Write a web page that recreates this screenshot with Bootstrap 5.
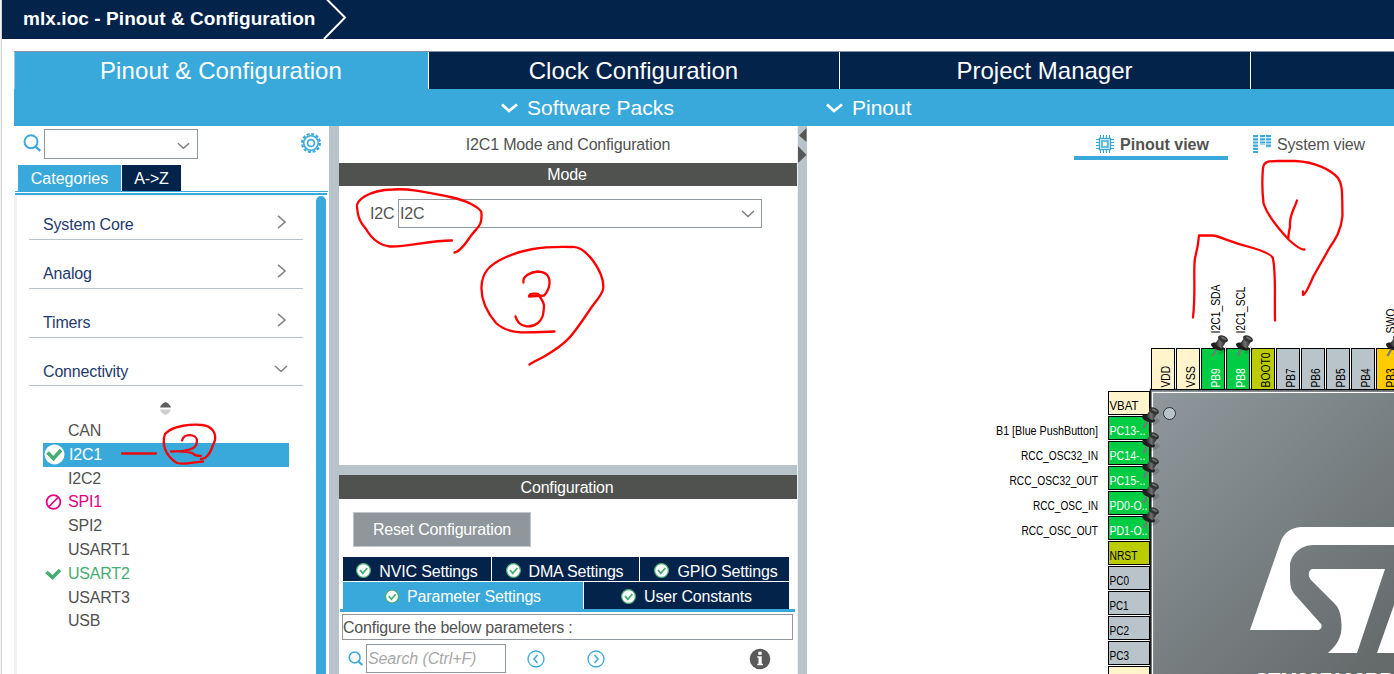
<!DOCTYPE html>
<html lang="en">
<head>
<meta charset="utf-8">
<title>mlx.ioc - Pinout &amp; Configuration</title>
<link href="https://cdn.jsdelivr.net/npm/bootstrap@5.3.0/dist/css/bootstrap.min.css" rel="stylesheet">
<style>
:root{--navy:#03234b;--sky:#39a9dc;--steel:#b8c3ca;--ink:#525252}
body{font-family:"Liberation Sans",Arial,sans-serif;font-size:16px;line-height:20px;letter-spacing:-.17px;color:var(--ink);height:674px;overflow:hidden;background:#fff}
svg{display:block;flex:none}
.app{height:674px;border-left:1px solid #f0f0f0;box-shadow:inset 1px 0 #d4d6d8;padding-left:1px}
.titlebar{height:39px;background:var(--navy);color:#fff;font-size:19px;font-weight:700;letter-spacing:.07px;padding-left:21px}
.titlebar span{width:300px;padding-bottom:2px}
.main-tabs{height:38px;margin:12px 0 0 12px;font-size:24px;letter-spacing:0;color:#fff;line-height:38px;border-top:1px solid #8794a8}
.main-tabs>div{background:var(--navy);text-align:center;width:411px;border-left:1px solid #fff;flex:none;padding-right:1px}
.main-tabs>.on{background:var(--sky);width:414px;border-left-color:#8fcdea;letter-spacing:.08px}
.subbar{height:37px;margin-left:12px;background:var(--sky);color:#fff;font-size:21px;letter-spacing:0;padding-left:487px}
.subbar .packs{width:325px}
.subbar span{margin-left:9px}
.work{height:548px;margin-left:12px}
.side{width:315px}
.split{width:10px;background:var(--steel);flex:none}
.mid{width:458px}
.finder{height:39px;padding:3px 8px 0 9px}
.combo{border:1px solid #8f979d;background:#fff;color:#525252}
.combo svg{color:#808080}
.finder .combo{width:154px;height:30px;margin-left:3px;padding-right:7px}
.cat-tabs{height:26px;margin-left:4px;color:#fff;line-height:27px}
.cat-tabs div{background:var(--navy);width:59px;text-align:center;margin-left:1px}
.cat-tabs .on{background:var(--sky);width:103px;margin:0;letter-spacing:0}
.rule1{height:1px;background:var(--sky);margin:0 1px}
.rule2{height:2px;background:var(--sky);margin:1px 2px 0 1px}
.tree{height:479px;border-left:3px solid #f1f1f2;padding:0 0 0 12px}
.scroller{width:10px;background:var(--sky);border-radius:5px 5px 0 0;margin:1px 3px 0 0}
.edge{width:274px}
.cat{height:49px;border-bottom:1px solid var(--steel);color:#243a6b;padding:24px 17px 0 14px}
.cat svg{margin-top:0}
.cat:first-child{height:45px;padding-top:20px}
.cat.open{height:48px;padding-right:15px}
.periph{margin:4px 14px 0;letter-spacing:-.2px}
.periph div{height:23.8px;line-height:24px;padding-left:25px;position:relative}
.periph svg{position:absolute;left:0;top:1px}
.periph .sel{background:var(--sky);color:#fff;padding-left:26px}
.barhead{background:#50524f;color:#fff;text-align:center;padding-right:2px}
.modepane{height:279px;padding:13px 35px 0 31px}
.modepane .combo{width:364px;height:29px;padding:0 6px 0 1px}
.reset{width:178px;height:35px;background:#90979c;border:1px solid #c3c7ca;color:#fff;line-height:33px;text-align:center;margin:13px 0 10px 14px}
.ptab{background:var(--navy);color:#fff;height:24px;padding-top:5px}
.ptab svg{margin-top:1px}
.ptab.low{height:27px;padding-top:3px}
.ptab.low svg{margin-top:-2px}
.desc{height:26px;border:1px solid #8f979d;line-height:25px;margin:2px 4px 0 3px;padding-left:0;letter-spacing:-.22px}
.find2{padding:4px 0 0 9px}
.find2 .combo{width:140px;height:29px;line-height:28px;font-style:italic;color:#a8a8a8;padding-left:1px;letter-spacing:-.1px}
.vtab{height:34px;padding-top:6px}
.vtab span{line-height:25px}
.vtab.on{font-weight:700;border-bottom:4px solid var(--sky);width:154px}
.pin-name{letter-spacing:0}
.ink{position:absolute;left:0;top:0;pointer-events:none}
</style>
</head>
<body>
<svg width="0" height="0" class="position-absolute">
 <defs>
  <symbol id="down" viewBox="0 0 14 8"><path d="M1 1 7 6.5 13 1" fill="none" stroke="currentColor" stroke-width="1.6"/></symbol>
  <symbol id="right" viewBox="0 0 9 14"><path d="M1 .8 8 7 1 13.2" fill="none" stroke="#858585" stroke-width="1.6"/></symbol>
  <symbol id="lens" viewBox="0 0 18 18"><circle cx="8" cy="7.7" r="6.5" fill="none" stroke="#39a9dc" stroke-width="1.9"/><path d="m12.3 12.3 4.9 4.5" stroke="#39a9dc" stroke-width="2.4"/></symbol>
  <symbol id="ok" viewBox="0 0 15 15"><circle cx="7.5" cy="7.5" r="6.9" fill="#fff" stroke="#45ad70" stroke-width="1.2"/><path d="m4 7 2.8 3.4L11.3 5" fill="none" stroke="#45ad70" stroke-width="1.8"/></symbol>
 </defs>
</svg>
<div class="app">
 <header class="titlebar d-flex align-items-center"><span>mlx.ioc - Pinout &amp; Configuration</span>
  <svg width="24" height="39"><path d="M3.500-1 22 17.500 1 39" fill="none" stroke="#fff" stroke-width="2"/></svg></header>
 <nav class="main-tabs d-flex overflow-hidden"><div class="on">Pinout &amp; Configuration</div><div>Clock Configuration</div><div>Project Manager</div><div></div></nav>
 <div class="subbar d-flex align-items-center">
  <div class="packs d-flex align-items-center"><svg width="17" height="10"><path d="M1 1.500 8 8 16 1.500" fill="none" stroke="#fff" stroke-width="2.800"/></svg><span style="letter-spacing:.08px">Software Packs</span></div>
  <div class="d-flex align-items-center"><svg width="17" height="10"><path d="M1 1.500 8 8 16 1.500" fill="none" stroke="#fff" stroke-width="2.800"/></svg><span>Pinout</span></div>
 </div>
 <main class="work d-flex overflow-hidden">
  <aside class="side flex-shrink-0">
   <div class="finder d-flex align-items-start">
    <svg width="18" height="18" viewBox="0 0 18 18" style="margin-top:5px"><use href="#lens"/></svg>
    <div class="combo d-flex align-items-center justify-content-end"><svg width="13" height="8" class="mt-1"><use href="#down"/></svg></div>
    <svg class="ms-auto mt-1" width="20" height="20" viewBox="-10 -10 20 20" fill="none" stroke="#39a9dc"><circle r="9" stroke-width="2" stroke-dasharray="3 1.710"/><circle r="7.300" stroke-width="1.600"/><circle r="3.400" stroke-width="1.700"/></svg>
   </div>
   <div class="cat-tabs d-flex"><div class="on">Categories</div><div>A-&gt;Z</div></div>
   <div class="rule1"></div><div class="rule2"></div>
   <div class="tree d-flex justify-content-between">
    <div class="edge">
     <div class="cat d-flex justify-content-between"><span>System Core</span><svg width="9" height="14"><use href="#right"/></svg></div>
     <div class="cat d-flex justify-content-between"><span>Analog</span><svg width="9" height="14"><use href="#right"/></svg></div>
     <div class="cat d-flex justify-content-between"><span>Timers</span><svg width="9" height="14"><use href="#right"/></svg></div>
     <div class="cat open d-flex justify-content-between"><span>Connectivity</span><svg width="14" height="8" style="margin-top:3px" color="#858585"><use href="#down"/></svg></div>
     <svg width="11" height="13" style="margin:16px 0 0 131px"><path d="M0 5.500Q1 2 5.500 0 10 2 11 5.500Z" fill="#5c5c5c"/><path d="M0 7.500H11Q10 11 5.500 13 1 11 0 7.500Z" fill="#cfcfcf"/></svg>
     <div class="periph">
      <div>CAN</div>
      <div class="sel"><svg width="22" height="22"><circle cx="11.500" cy="10.500" r="10" fill="#fff"/><path d="m4.500 8.500 6 6L18 6" fill="none" stroke="#45ad70" stroke-width="3.600"/></svg>I2C1</div>
      <div>I2C2</div>
      <div style="color:#e6007e"><svg width="22" height="22" fill="none" stroke="#e6007e" stroke-width="1.700"><circle cx="10.500" cy="11" r="6.900"/><path d="m6 15.500 9-9"/></svg>SPI1</div>
      <div>SPI2</div><div>USART1</div>
      <div style="color:#45ad70"><svg width="22" height="22"><path d="m3.500 9 6 5.500L17 7" fill="none" stroke="#45ad70" stroke-width="3.500"/></svg>USART2</div>
      <div>USART3</div><div>USB</div>
     </div>
    </div>
    <div class="scroller"></div>
   </div>
  </aside>
  <div class="split"></div>
  <section class="mid flex-shrink-0">
   <div class="text-center" style="height:37px;line-height:37px">I2C1 Mode and Configuration</div>
   <div class="barhead" style="height:23px;line-height:23px">Mode</div>
   <div class="modepane d-flex align-items-start justify-content-between"><span style="line-height:29px">I2C</span>
    <div class="combo d-flex align-items-center justify-content-between"><span>I2C</span><svg width="14" height="8"><use href="#down"/></svg></div></div>
   <div style="height:10px;background:var(--steel)"></div>
   <div class="barhead" style="height:24px;line-height:25px">Configuration</div>
   <div class="reset">Reset Configuration</div>
   <div style="margin:0 8px 0 4px">
    <div class="d-flex" style="gap:1px">
     <div class="ptab d-flex justify-content-center gap-2" style="width:148px"><svg width="15" height="15" viewBox="0 0 15 15"><use href="#ok"/></svg>NVIC Settings</div>
     <div class="ptab d-flex justify-content-center gap-2" style="width:147px;padding-right:2px"><svg width="15" height="15" viewBox="0 0 15 15"><use href="#ok"/></svg>DMA Settings</div>
     <div class="ptab d-flex justify-content-center gap-2 flex-fill" style="padding-left:3px"><svg width="15" height="15" viewBox="0 0 15 15"><use href="#ok"/></svg>GPIO Settings</div>
    </div>
    <div class="d-flex" style="gap:1px;margin-top:1px">
     <div class="ptab low d-flex align-items-center justify-content-center gap-2" style="width:240px;background:var(--sky)"><svg width="14" height="15" viewBox="0 0 15 15"><use href="#ok"/></svg>Parameter Settings</div>
     <div class="ptab low d-flex align-items-center justify-content-center gap-2 flex-fill"><svg width="15" height="15" viewBox="0 0 15 15"><use href="#ok"/></svg>User Constants</div>
    </div>
   </div>
   <div style="height:3px;background:var(--sky);margin:0 2px 0 1px"></div>
   <div class="desc">Configure the below parameters :</div>
   <div class="find2 d-flex align-items-center">
    <svg width="15" height="15" viewBox="0 0 18 18" style="margin-right:3px"><use href="#lens"/></svg>
    <div class="combo">Search (Ctrl+F)</div>
    <svg width="18" height="18" style="margin-left:21px" fill="none" stroke="#39a9dc"><circle cx="9" cy="9" r="8" stroke-width="1.300"/><path d="M10.500 5 7 9l3.500 4" stroke-width="1.500"/></svg>
    <svg width="18" height="18" style="margin-left:42px" fill="none" stroke="#39a9dc"><circle cx="9" cy="9" r="8" stroke-width="1.300"/><path d="M7.500 5 11 9l-3.500 4" stroke-width="1.500"/></svg>
    <svg width="22" height="22" style="margin-left:144px"><circle cx="11" cy="11" r="10.300" fill="#5a5a5a"/><path d="M9.300 3.800h3.400v3H9.300zM8.300 8.300h4.400v7.400h1.300v1.500H8.300v-1.500h1.200V9.800H8.300z" fill="#fff"/></svg>
   </div>
  </section>
  <div class="split" style="border-left:1px solid #eef0f1"><svg width="9" height="40"><path d="M8.500 2v14L1 9.500zM0 20v17l8.500-8z" fill="#565656"/></svg></div>
  <section class="flex-fill">
   <div class="d-flex" style="height:40px;padding-left:267px">
    <div class="vtab on d-flex justify-content-center" style="padding-left:3px"><svg width="18" height="18" style="margin:3px 6px 0 0" fill="none" stroke="#39a9dc"><path d="M4.500 0v18M7.500 0v18M10.500 0v18M13.500 0v18M0 4.500h18M0 7.500h18M0 10.500h18M0 13.500h18"/><path fill="#fff" stroke-width="1.500" d="M3.500 3.500h11v11h-11z"/><path stroke-width="1.500" d="M6 6h6v6H6z"/></svg><span style="letter-spacing:0">Pinout view</span></div>
    <div class="vtab d-flex" style="padding-left:25px"><svg width="18" height="18" style="margin:3px 6px 0 0" stroke="#39a9dc"><path d="M2.500 0v18" stroke-width="5" stroke-dasharray="2.200 1"/><path d="M9.500 0v10M15.500 0v13" stroke-width="5" stroke-dasharray="2.200 1"/></svg><span>System view</span></div>
   </div>
   <svg id="chip" class="pin-name" width="587" height="508" viewBox="807 166 587 508">
    <defs>
     <linearGradient id="body" gradientUnits="userSpaceOnUse" x1="1150" y1="390" x2="1400" y2="640"><stop offset="0" stop-color="#90989d"/><stop offset="1" stop-color="#656b6b"/></linearGradient>
     <linearGradient id="metal"><stop offset="0" stop-color="#151515"/><stop offset=".5" stop-color="#707070"/><stop offset="1" stop-color="#1c1c1c"/></linearGradient>
     <symbol id="pushpin" viewBox="0 0 22 24">
      <path d="M7 19q7 0 11-5l-3-3z" fill="#000" opacity=".14"/>
      <path d="m6 13-4.500 8" stroke="#777" stroke-width="2.200"/>
      <path d="M0 9C3 6 10 8 13 13 13 16 10 16 7 15 3 14 0 12 0 9Z" fill="#1f1f1f"/>
      <path d="M8 3 3.500 9.500 11 13.500 15 6.500z" fill="url(#metal)"/>
      <ellipse cx="12" cy="3.800" rx="5.200" ry="3.100" transform="rotate(25 12 3.800)" fill="#333"/>
      <ellipse cx="12.500" cy="3.200" rx="3" ry="1.100" transform="rotate(25 12.500 3.200)" fill="#6b6b6b"/>
     </symbol>
    </defs>
    <path d="M1150.500 680V389.500H1400V680" fill="url(#body)" stroke="#222" stroke-width="1.500"/>
    <path d="M1152.500 680V392.500H1400" fill="none" stroke="#fff" stroke-width="1.200"/>
    <circle cx="1169.500" cy="413.500" r="6" fill="#b8c3ca" stroke="#333"/>
    <g fill="#fff"><path d="M1394 527H1301C1290 528 1284 533 1280.500 542L1250 630H1319C1322 628 1322 626 1321 624L1297 597C1291 591 1290 586 1290 577V566C1290 556 1300 545 1313 545H1394Z"/><path d="M1312 569H1385L1357 653H1328C1336 646 1342 638 1341.500 625 1341 613 1339 608 1334 603L1311 580C1307 575 1309 570 1312 569Z"/><path d="M1394 605V653H1377Z"/></g>
    <text x="1255" y="687" font-size="20" font-weight="700" fill="#fff">STM32F103RBTx</text>
    <g id="pins"></g>
   </svg>
  </section>
 </main>
</div>
<svg class="ink" width="1394" height="674" fill="none" stroke="#f00" stroke-width="2.300" stroke-linecap="round" stroke-linejoin="round">
 <path d="M452 240.500C433 240 407 247 390 246.500 378 245 370 236 366 229 361 223 358 219 357 207 356 202 366 190 393 189.500 410 188 430 193 450 197 466 200 481 208 481.500 213 482 227 478 226 470 237 464 246 459 252 454.500 252.500"/>
 <path d="M554.500 331.500C530 332 510 336 496 323 486 311 481 299 481.500 287 482 272 490 265 502 259 520 250 540 246 572 247 585 246 597 265 601 275 607 291 601 294 591 308 571 338 567 343 545 356 538 360 533 362 529.500 364.500"/>
 <path d="M523.500 282.500C522 276 531 272 538 271.500 547 272 550 277 549.500 284 549 289 546 294 544 295.500L529 296.500C529 294 533 293 538 294 541 298 544 302 544 306 543.500 314 543 319 538 323 530 329 522 326 519 323Q516 319 515.500 316.500"/>
 <g stroke="#e80c12"><path d="M122 453.500H156M182 440.500C184 433 196 434 197 440 197 446 195 449 185 450.500 180 452 175 451.500 171 451.500 180 451 190 452 193 453.500 194 455 197 456 201 456"/></g>
 <path d="M203 461.500C193 462 186 465 177 463 164 455 162 443 165 434 173 425 193 424 202 425 213 426 216 434 215 440 212 448 210 455 205 458L201 459"/>
 <path d="M1193 317.500C1196 290 1193 272 1195 258Q1198 247 1199 235.500H1212C1221 236 1228 242 1253 248 1263 251 1273 255 1273 259 1276 273 1274.500 295 1275 320.500"/>
 <path d="M1304.500 249.500Q1300 250 1289 240C1276 226 1266 212 1263.500 203 1262 190 1262 179 1263 168 1264 161 1269 161 1278 161H1295C1316 162 1331 170 1338 178 1343 185 1342 193 1342.500 216 1341 231 1335 240 1330 247L1313 277C1310 284 1306 294 1303 295L1303 291.500M1297 200.500C1294 210 1289 215 1290 227Q1288 236 1288.500 238"/>
</svg>
<script src="https://cdn.jsdelivr.net/npm/bootstrap@5.3.0/dist/js/bootstrap.bundle.min.js"></script>
<script>
const C={y:'#fff4cc',g:'#00cc44',o:'#bbcc00',s:'#b8c3ca',a:'#ffcc00'};
// name, colour, drawn width, signal label, signal width
const topRow=[['VDD','y',21.5],['VSS','y',21.5],['PB9','g',19,'I2C1_SDA',49],['PB8','g',19,'I2C1_SCL',47],['BOOT0','o',35],['PB7','s',19],['PB6','s',19],['PB5','s',19],['PB4','s',19],['PB3','a',19,'SWO',25]];
const left=[['VBAT','y',29],['PC13-..','g',36,'B1 [Blue PushButton]',102],['PC14-..','g',36,'RCC_OSC32_IN',77],['PC15-..','g',36,'RCC_OSC32_OUT',88.5],['PD0-O..','g',38,'RCC_OSC_IN',65],['PD1-O..','g',38,'RCC_OSC_OUT',76.5],['NRST','o',28],['PC0','s',19.5],['PC1','s',19],['PC2','s',19.5],['PC3','s',19.5],['','y',0]];
const t=(s,x,y,w,f,e='')=>s?`<text x="${x}" y="${y}" font-size="12" textLength="${w}" lengthAdjust="spacingAndGlyphs" fill="${f}" ${e}>${s}</text>`:'';
let h='',p='';
topRow.forEach(([n,c,w,l,lw],i)=>{const x=1151.5+25*i,b=x+18.5;
 h+=`<rect x="${x}" y="348.5" width="23" height="41" fill="${C[c]}" stroke="#000"/>`+t(n,b,387.5,w,c=='g'?'#fff':'#000',`transform="rotate(-90 ${b} 387.5)"`);
 if(l){h+=t(l,b,333.5,lw,'#000',`transform="rotate(-90 ${b} 333.5)"`);p+=`<use href="#pushpin" x="${x+9.5}" y="335" width="22" height="24"/>`}});
left.forEach(([n,c,w,l,lw],i)=>{const y=391.5+25*i;
 h+=`<rect x="1108.500" y="${y}" width="41" height="23" fill="${C[c]}" stroke="#000"/>`+t(n,1109.5,y+18.5,w,c=='g'?'#fff':'#000');
 if(l){h+=t(l,1098-lw,y+18.5,lw,'#000');p+=`<use href="#pushpin" x="1142" y="${y-9.5}" width="22" height="24"/>`}});
document.getElementById('pins').innerHTML=h+p;
</script>
</body>
</html>
